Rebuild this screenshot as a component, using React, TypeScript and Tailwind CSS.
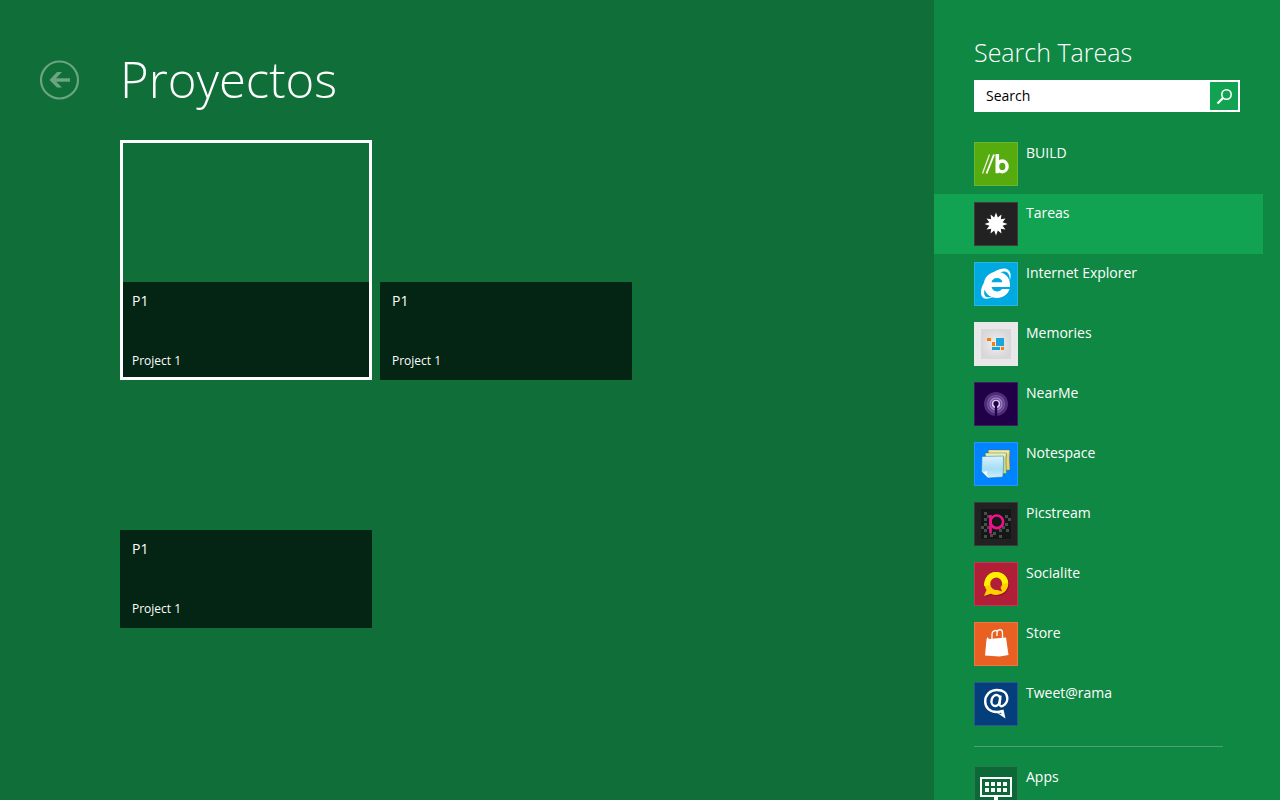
import type { ReactNode } from 'react';

const projects = [
  { id: 1, code: 'P1', name: 'Project 1', selected: true },
  { id: 2, code: 'P1', name: 'Project 1', selected: false },
  { id: 3, code: 'P1', name: 'Project 1', selected: false },
];

// dark pixels behind the Picstream "p"
const picstreamDots = [
  [10, 10], [10, 16], [13, 13], [7, 24], [10, 21], [10, 27], [13, 24], [10, 33],
  [16, 32], [19, 30], [25, 27], [25, 33], [28, 24], [32, 27], [31, 21], [34, 16], [31, 13],
];

const keyColumns = [11, 17, 23, 29];
const keyRows = [16, 22];

type AppEntry = {
  name: string;
  tile: string;
  icon: ReactNode;
  selected?: boolean;
};

const apps: AppEntry[] = [
  {
    name: 'BUILD',
    tile: 'bg-[#56ab0e] border-[#6cb62e]',
    icon: (
      <>
        <path d="M8.5 31.5 15.5 12.5" stroke="#fff" strokeWidth="1.4" opacity=".8" />
        <path d="M12.5 31.500 20 12.5" stroke="#fff" strokeWidth="1.9" />
        <path d="M23.300 12v19.200" stroke="#fff" strokeWidth="3.600" />
        <ellipse cx="28.300" cy="24.400" rx="4.800" ry="5.400" fill="none" stroke="#fff" strokeWidth="3.400" />
      </>
    ),
  },
  {
    name: 'Tareas',
    tile: 'bg-[#222222] border-[#3c3c3c]',
    selected: true,
    icon: (
      <path
        fill="#fff"
        d="M22 10.500 23.800 15.400 27.500 12.500 26.800 17.200 31.500 16.500 28.600 20.200 33.500 22 28.600 23.800 31.500 27.500 26.800 26.800 27.500 31.500 23.800 28.600 22 33.500 20.200 28.600 16.500 31.500 17.200 26.800 12.500 27.500 15.400 23.800 10.500 22 15.400 20.200 12.500 16.500 17.200 17.200 16.500 12.500 20.200 15.400Z"
      />
    ),
  },
  {
    name: 'Internet Explorer',
    tile: 'bg-[#00a9e0] border-[#25b7e5]',
    icon: (
      <>
        <path
          fill="#fff"
          fillRule="evenodd"
          d="M23 9.800c7.400 0 13 5.500 13 12.900v2.400H17.600c.4 2.700 2.500 4.300 5.400 4.300 2.300 0 4-.8 5-2.300h7.600c-1.900 5.500-6.600 8.900-12.600 8.900-7.500 0-13.100-5.500-13.100-13.100S15.500 9.800 23 9.800Zm-5.500 10.500h10.900c-.3-2.600-2.500-4.300-5.400-4.300s-5 1.700-5.500 4.300Z"
        />
        <path
          fill="#fff"
          d="M35.800 18.500c1.600-4.600 1-8.600-1.600-10.600-4-3-12-.6-18.200 5C8.800 19.500 5 29.400 8 34.500c2 3.300 7.200 2.700 12.600-.6-4.400 1.900-8.100 1.900-9.600-.2-2.500-3.500.8-11.200 6.700-17.300 5.800-5.900 12.700-8.600 15.600-6 1.900 1.700 2.600 4.500 2.500 8.100Z"
        />
      </>
    ),
  },
  {
    name: 'Memories',
    tile: 'bg-[#e8e8e8] border-[#e8e8e8]',
    icon: (
      <>
        <defs>
          <radialGradient id="memories">
            <stop offset="0" stopColor="#f0f0f0" />
            <stop offset="1" stopColor="#d8d8d8" />
          </radialGradient>
        </defs>
        <path fill="url(#memories)" d="M7 7h30v30H7z" />
        <path fill="#ff7d00" d="M13 16h4v3h-4zM18 20h3v4h-3zM27 25h3v3h-3z" />
        <path fill="#1ca5dc" d="M22 16h8v8h-8zM18 25h8v3h-8z" />
      </>
    ),
  },
  {
    name: 'NearMe',
    tile: 'bg-[#200046] border-[#3b1f5c]',
    icon: (
      <>
        <circle cx="22" cy="22" r="12" fill="#4d2c78" />
        <circle cx="22" cy="22" r="9.5" fill="#7652a0" stroke="#4d2c78" strokeWidth=".6" />
        <circle cx="22" cy="22" r="7.2" fill="#9c7fc4" stroke="#4d2c78" strokeWidth=".8" />
        <circle cx="22" cy="22" r="4.8" fill="#dccbed" stroke="#4d2c78" strokeWidth=".8" />
        <circle cx="22" cy="21.5" r="2.6" fill="#200046" />
        <path d="M22 22v12.500" stroke="#200046" strokeWidth="2.400" />
      </>
    ),
  },
  {
    name: 'Notespace',
    tile: 'bg-[#0084ff] border-[#2596ff]',
    icon: (
      <>
        <defs>
          <linearGradient id="note" x1="0" y1="0" x2="0" y2="1">
            <stop offset="0" stopColor="#d9f2fc" />
            <stop offset=".6" stopColor="#a2ddf7" />
            <stop offset="1" stopColor="#d3f0fb" />
          </linearGradient>
        </defs>
        <path fill="#f3cf77" stroke="#47704f" strokeWidth=".5" d="M14 8h22l-.5 8 .5 12-20 1Z" />
        <path fill="#f9e6aa" d="M15 8.500h20l-1 3.500H15Z" />
        <path fill="#c2dc86" stroke="#47704f" strokeWidth=".5" d="M11 11h21.500l-.5 8 .5 12.500-19 1Z" />
        <path fill="#e3f0bb" d="M12 11.500h20l-1 3.500H12Z" />
        <path fill="url(#note)" stroke="#27739f" strokeWidth=".5" d="M8 14.500 29.500 14c-.2 7.500.3 14-.8 21L14 36l-6.500-6.500Z" />
        <path fill="#fff" d="M8 29.500c2 1 4 0 5.500-.5-1.500 3 0 5 1 7Z" />
      </>
    ),
  },
  {
    name: 'Picstream',
    tile: 'bg-[#222222] border-[#3c3c3c]',
    icon: (
      <>
        <path fill="#131716" d="M7 7h30v30H7z" />
        {picstreamDots.map(([x, y]) => (
          <rect key={`${x}-${y}`} x={x} y={y} width="3" height="3" fill="#4b4e4d" />
        ))}
        <path d="M16.500 13v18.500" stroke="#f0128c" strokeWidth="2.600" />
        <circle cx="22.800" cy="19.800" r="6.300" fill="none" stroke="#f0128c" strokeWidth="2.600" />
      </>
    ),
  },
  {
    name: 'Socialite',
    tile: 'bg-[#b01e38] border-[#bc3c53]',
    icon: (
      <>
        <path
          fill="#7c1228"
          opacity=".7"
          transform="translate(1 1)"
          d="M22 10a12 11.500 0 1 1-5 21.800L10 34l2.500-6A11.500 11.500 0 0 1 22 10Z"
        />
        <path fill="#ffcf00" d="M22 10a12 11.500 0 1 1-5 21.800L10 34l2.500-6A11.500 11.500 0 0 1 22 10Z" />
        <path fill="#fff000" d="M22 10c6.500 0 12 5 12 11l-24 3c0-8 5-14 12-14Z" />
        <path fill="#b01e38" d="M22 15.500a6 6 0 0 1 4.500 10l1.500 4-4.500-1.500a6.300 6.300 0 1 1-1.500-12.500Z" />
      </>
    ),
  },
  {
    name: 'Store',
    tile: 'bg-[#e86122] border-[#eb7741]',
    icon: (
      <>
        <path fill="#fff" d="M12.500 17.500 13.500 15l1.500 2 17-1.500 2.500 17.500-9 1.500-14.500-1Z" />
        <path
          fill="none"
          stroke="#fff"
          strokeWidth="1.300"
          d="M18 17v-5c0-3.500 4-4 5-3M23 14v-3c.5-4.500 5.500-4.500 5.500 0v5"
        />
      </>
    ),
  },
  {
    name: 'Tweet@rama',
    tile: 'bg-[#043f7c] border-[#28598d]',
    icon: (
      <>
        <path
          fill="none"
          stroke="#fff"
          strokeWidth="2.400"
          d="M26.500 13.500 25.500 21c-.4 3.300 1.700 3.700 3.500 2.700 3-1.700 4.300-4.200 4.300-7.200C33.300 11 29 8 23 8 15.800 8 11.200 13.200 11.200 19.500c0 6.500 4.800 10.500 11.300 10.500 2 0 4-.3 6-1"
        />
        <ellipse cx="21.800" cy="18.500" rx="4.200" ry="5.600" fill="none" stroke="#fff" strokeWidth="2.400" transform="rotate(15 21.800 18.500)" />
        <path fill="#fff" d="M22.500 30.500 31.500 36.500 29.500 27.500 26.500 28.500 27.500 32Z" />
      </>
    ),
  },
];

function AppRow({ app }: { app: AppEntry }) {
  return (
    <li>
      <button
        type="button"
        className={`flex w-full items-start gap-2 py-2 pl-10 text-left ${app.selected ? 'bg-[#12a352]' : ''}`}
      >
        <span className={`size-11 shrink-0 border ${app.tile}`}>
          <svg viewBox="1 1 42 42" className="size-full" fill="none" aria-hidden="true">
            {app.icon}
          </svg>
        </span>
        <span className="text-sm leading-[22px]">{app.name}</span>
      </button>
    </li>
  );
}

function AppsIcon() {
  return (
    <svg viewBox="1 1 42 42" className="size-full" fill="none" aria-hidden="true">
      <path d="M7 12h30v18H7z" stroke="#fff" strokeWidth="2" />
      {keyRows.map((y) =>
        keyColumns.map((x) => <rect key={`${x}-${y}`} x={x} y={y} width="4" height="4" fill="#fff" />)
      )}
      <path d="M20 31h4v5h-4z" fill="#fff" />
    </svg>
  );
}

export default function App() {
  return (
    <div className="flex h-screen overflow-hidden bg-[#106e39] font-['Open_Sans','Noto_Sans',sans-serif] text-white">
      <main className="flex min-w-0 flex-1 flex-col">
        <header className="flex h-[140px] shrink-0 items-center gap-10 pt-5 pl-10">
          <button type="button" aria-label="Back" className="size-10 shrink-0">
            <svg viewBox="0 0 40 40" className="size-full" fill="none" stroke="#6ba582" aria-hidden="true">
              <circle cx="19.5" cy="20" r="18.5" strokeWidth="2.2" />
              <path d="M30 20H12" strokeWidth="3.5" />
              <path fill="#6ba582" stroke="none" d="M9.500 20 17 12h5l-7.500 8 7.500 7.500h-5Z" />
            </svg>
          </button>
          <h1 className="text-[49px] font-light">Proyectos</h1>
        </header>

        <section className="grid grid-cols-[repeat(2,252px)] auto-rows-[240px] gap-2 pl-[120px]">
          {projects.map((project) => (
            <article
              key={project.id}
              className={`flex flex-col justify-end ${project.selected ? 'outline-[3px] -outline-offset-3 outline-white' : ''}`}
            >
              <div className="flex h-[98px] flex-col justify-between bg-[#042514] px-3 py-2">
                <h2 className="text-sm leading-[22px]">{project.code}</h2>
                <p className="text-xs leading-[22px]">{project.name}</p>
              </div>
            </article>
          ))}
        </section>
      </main>

      <aside className="w-[346px] shrink-0 bg-[#0f8844] pt-8">
        <h2 className="pl-10 text-[25px] leading-10 font-light">Search Tareas</h2>
        <form className="mx-10 mt-2 flex h-8 bg-white p-0.5" onSubmit={(e) => e.preventDefault()}>
          <input
            type="text"
            aria-label="Search"
            defaultValue="Search"
            className="min-w-0 flex-1 px-2.5 text-sm text-black outline-none"
          />
          <button type="submit" aria-label="Submit search" className="size-7 shrink-0 bg-[#12a352]">
            <svg viewBox="0 0 28 28" className="size-full" fill="none" stroke="#fff" aria-hidden="true">
              <circle cx="16.5" cy="12.5" r="4.7" strokeWidth="1.6" />
              <path d="M13 16 7.5 21.5" strokeWidth="2.3" />
            </svg>
          </button>
        </form>

        <ul className="mt-[22px] mr-[17px]">
          {apps.map((app) => (
            <AppRow key={app.name} app={app} />
          ))}
        </ul>

        <hr className="mt-3 mr-[57px] ml-10 border-[#4ea26f]" />

        <button type="button" className="mt-[19px] flex items-start gap-2 pl-10 text-left">
          <span className="size-11 shrink-0 border border-[#2a7a4b] bg-[#0c6836]">
            <AppsIcon />
          </span>
          <span className="text-sm leading-[22px]">Apps</span>
        </button>
      </aside>
    </div>
  );
}
